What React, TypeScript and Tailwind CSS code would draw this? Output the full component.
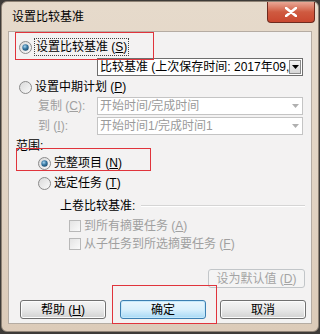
import React from "react";

const font = { fontFamily: '"Liberation Sans","Noto Sans CJK SC",sans-serif' };

function Radio({ checked }: { checked?: boolean }) {
  return (
    <svg width="13" height="13" viewBox="0 0 13 13" className="shrink-0">
      <defs>
        <linearGradient id="rb" x1="0" y1="0" x2="1" y2="1">
          <stop offset="0" stopColor="#d8d8d8" />
          <stop offset="1" stopColor="#fbfbfb" />
        </linearGradient>
        <radialGradient id="rd" cx="0.4" cy="0.35" r="0.7">
          <stop offset="0" stopColor="#a9d6f0" />
          <stop offset="0.5" stopColor="#3a7ba6" />
          <stop offset="1" stopColor="#1d4c6e" />
        </radialGradient>
      </defs>
      <circle cx="6.5" cy="6.5" r="6" fill="url(#rb)" stroke="#8a8a8a" strokeWidth="1" />
      {checked && <circle cx="6.5" cy="6.5" r="3.2" fill="url(#rd)" />}
    </svg>
  );
}

function Check() {
  return (
    <div className="w-[12px] h-[12px] shrink-0 border border-[#b8b8b8] bg-gradient-to-br from-[#e4e4e4] to-[#fafafa]" />
  );
}

function Arrow({ color }: { color: string }) {
  return (
    <svg width="7" height="4" viewBox="0 0 7 4">
      <path d="M0 0 L7 0 L3.5 4 Z" fill={color} />
    </svg>
  );
}

function Combo({ text, disabled }: { text: string; disabled?: boolean }) {
  return (
    <div
      className={`ml-[88px] w-[206px] h-[18px] flex items-stretch border ${
        disabled ? "border-[#c4c4c4] text-[#9a9a9a]" : "border-[#6e6e6e] text-black"
      } bg-white`}
    >
      <div className="flex-1 flex items-center pl-[2px] text-[12px] leading-none whitespace-nowrap overflow-hidden">
        {text}
      </div>
      <div
        className={`w-[12px] my-[1px] mr-[1px] flex items-center justify-center ${
          disabled ? "" : "bg-gradient-to-b from-[#f4f4f4] to-[#d6d6d6] border border-[#8a8a8a]"
        }`}
      >
        <Arrow color={disabled ? "#b0b0b0" : "#000"} />
      </div>
    </div>
  );
}

function Btn({
  children,
  kind = "normal",
  className = "",
}: {
  children: React.ReactNode;
  kind?: "normal" | "default" | "disabled";
  className?: string;
}) {
  const styles =
    kind === "default"
      ? "border-[#3c7fb1] bg-gradient-to-b from-[#eaf6fd] via-[#d9f0fc] to-[#a7d9f5] text-black shadow-[inset_0_0_0_1px_#c6e9fb]"
      : kind === "disabled"
      ? "border-[#c2c6c9] bg-[#f4f4f4] text-[#a4a4a4]"
      : "border-[#707070] bg-gradient-to-b from-[#f5f5f5] via-[#e8e8e8] to-[#d2d2d2] text-black shadow-[inset_0_0_0_1px_#fcfcfc]";
  return (
    <div
      className={`h-[19px] rounded-[3px] border flex items-center justify-center text-[12px] leading-none ${styles} ${className}`}
    >
      {children}
    </div>
  );
}

export default function App() {
  return (
    <div className="relative w-[320px] h-[334px] bg-[#3e3b38] overflow-hidden" style={font}>
      <div className="absolute left-[1px] top-[1px] w-[318px] h-[331px] rounded-[6px] border border-[#8f8376] bg-gradient-to-b from-[#e6dacb] via-[#e2d4c4] to-[#dccbb9] flex flex-col">
        {/* title bar */}
        <div className="h-[29px] flex items-start shrink-0">
          <div className="pl-[10px] pt-[9px] text-[12px] leading-none text-black">设置比较基准</div>
          <div className="ml-auto mr-[3px] w-[48px] h-[21px] rounded-b-[4px] border border-t-0 border-[#6e2a1e] bg-gradient-to-b from-[#e8a796] via-[#cf5a40] to-[#c9472f] flex items-center justify-center">
            <svg width="12" height="10" viewBox="0 0 12 10">
              <path d="M1 1 L11 9 M11 1 L1 9" stroke="#fff" strokeWidth="2.6" strokeLinecap="round" />
            </svg>
          </div>
        </div>
        {/* panel */}
        <div className="ml-[6px] w-[304px] h-[293px] border border-[#b5aca3] bg-[#f3f2f2] flex flex-col">
          <div className="mt-[6px] h-[18px] pl-[10px] flex items-center gap-[2px]">
            <Radio checked />
            <span className="text-[12px] leading-none px-[1px] py-[2px] border border-dotted border-[#444]">
              设置比较基准 (<span className="underline">S</span>)
            </span>
          </div>
          <div className="mt-[2px]">
            <Combo text="比较基准 (上次保存时间: 2017年09," />
          </div>
          <div className="mt-[2px] h-[18px] pl-[10px] flex items-center gap-[3px]">
            <Radio />
            <span className="text-[12px] leading-none">
              设置中期计划 (<span className="underline">P</span>)
            </span>
          </div>
          <div className="relative mt-[1px] h-[18px]">
            <span className="absolute left-[29px] top-[3px] text-[12px] leading-none text-[#a0a0a0]">
              复制 (<span className="underline">C</span>):
            </span>
            <Combo text="开始时间/完成时间" disabled />
          </div>
          <div className="relative mt-[2px] h-[18px]">
            <span className="absolute left-[29px] top-[3px] text-[12px] leading-none text-[#a0a0a0]">
              到 (<span className="underline">I</span>):
            </span>
            <Combo text="开始时间1/完成时间1" disabled />
          </div>
          <div className="mt-[4px] h-[14px] pl-[7px] text-[12px] leading-none flex items-center">范围:</div>
          <div className="mt-[1px] h-[18px] pl-[29px] flex items-center gap-[3px]">
            <Radio checked />
            <span className="text-[12px] leading-none">
              完整项目 (<span className="underline">N</span>)
            </span>
          </div>
          <div className="mt-[2px] h-[18px] pl-[29px] flex items-center gap-[3px]">
            <Radio />
            <span className="text-[12px] leading-none">
              选定任务 (<span className="underline">T</span>)
            </span>
          </div>
          <div className="mt-[6px] h-[16px] pl-[51px] pr-[6px] flex items-center gap-[6px]">
            <span className="text-[12px] leading-none whitespace-nowrap">上卷比较基准:</span>
            <div className="flex-1 h-[2px] border-t border-[#d5d5d5] border-b border-b-white" />
          </div>
          <div className="mt-[3px] h-[17px] pl-[60px] flex items-center gap-[3px]">
            <Check />
            <span className="text-[12px] leading-none text-[#a0a0a0]">
              到所有摘要任务 (<span className="underline">A</span>)
            </span>
          </div>
          <div className="mt-[1px] h-[17px] pl-[60px] flex items-center gap-[3px]">
            <Check />
            <span className="text-[12px] leading-none text-[#a0a0a0]">
              从子任务到所选摘要任务 (<span className="underline">F</span>)
            </span>
          </div>
          <div className="mt-[17px] flex pl-[199px]">
            <Btn kind="disabled" className="w-[97px]">
              设为默认值 (<span className="underline">D</span>)
            </Btn>
          </div>
          <div className="mt-[12px] flex pl-[11px] gap-[14px]">
            <Btn className="w-[86px]">
              帮助 (<span className="underline">H</span>)
            </Btn>
            <Btn kind="default" className="w-[86px]">
              确定
            </Btn>
            <Btn className="w-[86px]">取消</Btn>
          </div>
        </div>
      </div>
      {/* red annotation boxes */}
      <div className="absolute left-[15px] top-[32px] w-[139px] h-[28px] border-[1.5px] border-[#e0343c]" />
      <div className="absolute left-[16px] top-[148px] w-[135px] h-[23px] border-[1.5px] border-[#e0343c]" />
      <div className="absolute left-[112px] top-[285px] w-[105px] h-[39px] border-[1.5px] border-[#e0343c]" />
    </div>
  );
}
